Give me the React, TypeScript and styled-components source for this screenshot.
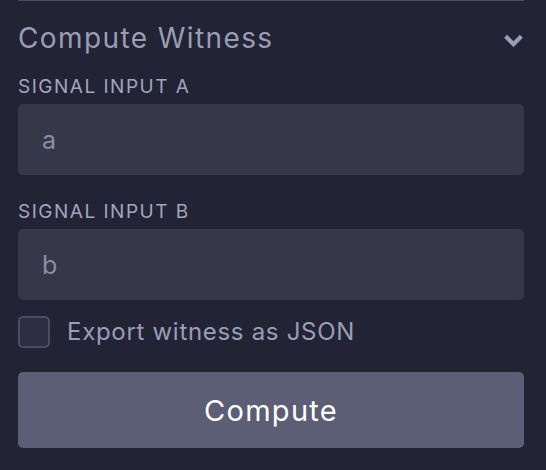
import styled, { createGlobalStyle } from 'styled-components';

const GlobalStyle = createGlobalStyle`
	html, body {
		margin: 0;
		padding: 0;
		background: #222335;
	}

	body {
		font-family: Inter, 'Noto Sans', sans-serif;
	}

	* {
		box-sizing: border-box;
	}
`;

const Panel = styled.section`
	width: 546px;
	height: 470px;
	background: #222335;
	padding: 0 22px 0 18px;
`;

const Inner = styled.div`
	border-top: 1px solid #4a4c5f;
	display: flex;
	flex-direction: column;
`;

const Header = styled.div`
	display: flex;
	align-items: center;
	justify-content: space-between;
	margin-top: 19px;
	height: 36px;
`;

const Title = styled.h3`
	margin: 0;
	font-size: 28px;
	line-height: 36px;
	font-weight: 400;
	letter-spacing: 1.4px;
	color: #9a9db4;
`;

const Chevron = styled.svg`
	width: 21px;
	height: 14px;
	margin-top: 4px;
	display: block;
`;

const Field = styled.div<{ $first?: boolean }>`
	display: flex;
	flex-direction: column;
	gap: 6px;
	margin-top: ${(props) => (props.$first ? '20px' : '26px')};
`;

const Label = styled.label`
	font-size: 19px;
	line-height: 22px;
	letter-spacing: 1.5px;
	text-transform: uppercase;
	color: #a2a5bb;
`;

const Input = styled.input`
	width: 100%;
	height: 71px;
	border: none;
	outline: none;
	border-radius: 5px;
	background: #363749;
	padding: 0 24px;
	font-family: Inter, 'Noto Sans', sans-serif;
	font-size: 25px;
	color: #d0d2e0;

	&::placeholder {
		color: #8b8ea3;
	}
`;

const CheckRow = styled.label`
	display: flex;
	align-items: center;
	gap: 17px;
	margin-top: 16px;
	height: 31px;
	cursor: pointer;
`;

const CheckBox = styled.span`
	width: 32px;
	height: 32px;
	border: 2px solid #4a4c60;
	border-radius: 5px;
	background: #2d2e41;
	flex-shrink: 0;
`;

const CheckText = styled.span`
	font-size: 24px;
	line-height: 30px;
	color: #9a9db4;
	letter-spacing: 0.7px;
`;

const Button = styled.button`
	margin-top: 25px;
	width: 100%;
	height: 76px;
	border: none;
	border-radius: 5px;
	background: #5c5e75;
	color: #ffffff;
	font-family: Inter, 'Noto Sans', sans-serif;
	font-size: 29px;
	letter-spacing: 1.3px;
	cursor: pointer;
`;

const App = () => {
	return (
		<>
			<GlobalStyle />
			<Panel>
				<Inner>
					<Header>
						<Title>Compute Witness</Title>
						<Chevron viewBox="0 0 20 13" fill="none">
							<polyline
								points="2.5,3 10,10.5 17.5,3"
								stroke="#9a9db4"
								strokeWidth="4"
								strokeLinejoin="miter"
							/>
						</Chevron>
					</Header>

					<Field $first>
						<Label htmlFor="sig-a">Signal input A</Label>
						<Input id="sig-a" placeholder="a" />
					</Field>

					<Field>
						<Label htmlFor="sig-b">Signal input B</Label>
						<Input id="sig-b" placeholder="b" />
					</Field>

					<CheckRow>
						<CheckBox />
						<CheckText>Export witness as JSON</CheckText>
					</CheckRow>

					<Button>Compute</Button>
				</Inner>
			</Panel>
		</>
	);
};

export default App;
